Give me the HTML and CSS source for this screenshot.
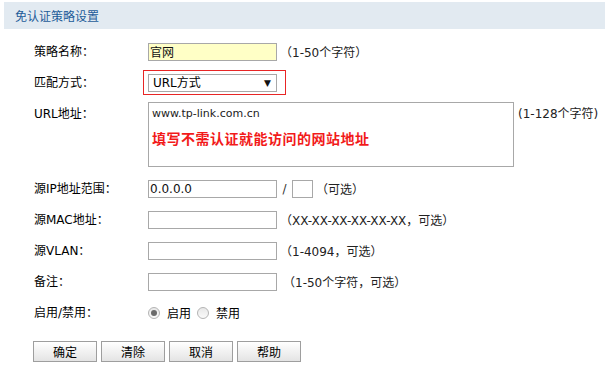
FILE: index.html
```html
<!DOCTYPE html>
<html lang="zh-CN">
<head>
<meta charset="utf-8">
<title>免认证策略设置</title>
<link rel="stylesheet" href="styles.css">
</head>
<body>
<div class="page">
  <div class="title-bar">免认证策略设置</div>
  <div class="form">
    <div class="row">
      <div class="label">策略名称：</div>
      <div class="input name">官网</div>
      <div class="hint">（1-50个字符）</div>
    </div>
    <div class="row">
      <div class="label">匹配方式：</div>
      <div class="select-wrap">
        <div class="select"><span>URL方式</span><span class="arrow">▼</span></div>
        <div class="mark"></div>
      </div>
    </div>
    <div class="row row-area">
      <div class="label">URL地址：</div>
      <div class="textarea">
        <div class="url">www.tp-link.com.cn</div>
        <div class="note">填写不需认证就能访问的网站地址</div>
      </div>
      <div class="hint hint-area">(1-128个字符)</div>
    </div>
    <div class="row">
      <div class="label">源IP地址范围：</div>
      <div class="input">0.0.0.0</div>
      <div class="slash">/</div>
      <div class="input mask"></div>
      <div class="hint">（可选）</div>
    </div>
    <div class="row">
      <div class="label">源MAC地址：</div>
      <div class="input"></div>
      <div class="hint">（XX-XX-XX-XX-XX-XX，可选）</div>
    </div>
    <div class="row">
      <div class="label">源VLAN：</div>
      <div class="input"></div>
      <div class="hint">（1-4094，可选）</div>
    </div>
    <div class="row">
      <div class="label">备注：</div>
      <div class="input"></div>
      <div class="hint hint-wide">（1-50个字符，可选）</div>
    </div>
    <div class="row">
      <div class="label">启用/禁用：</div>
      <div class="radios">
        <span class="radio checked"></span><span class="radio-text">启用</span>
        <span class="radio"></span><span class="radio-text">禁用</span>
      </div>
    </div>
    <div class="buttons">
      <div class="btn">确定</div>
      <div class="btn">清除</div>
      <div class="btn">取消</div>
      <div class="btn">帮助</div>
    </div>
  </div>
</div>
</body>
</html>
```
FILE: styles.css
```css
* { box-sizing: border-box; }
html, body { margin: 0; padding: 0; background: #fff; }
body {
  font-family: "DejaVu Sans", "Noto Sans CJK SC", sans-serif;
  font-size: 12px;
  color: #000;
}
.page { width: 605px; height: 374px; padding-top: 2px; padding-left: 4px; }
.title-bar {
  height: 27px;
  background: #e2eaf1;
  color: #1d5c99;
  line-height: 27px;
  padding-left: 11px;
  font-family: "Noto Sans CJK SC", sans-serif;
}
.form { padding-top: 7px; padding-left: 30px; }
.row {
  display: flex;
  align-items: center;
  height: 31px;
}
.label { width: 114px; line-height: 16px; }
.input {
  width: 129px;
  height: 18px;
  border: 1px solid #a8a8a8;
  background: #fff;
  line-height: 16px;
  padding-left: 1px;
  color: #111;
}
.input.name { background: #ffffc6; font-family: "Noto Sans CJK SC", sans-serif; }
.input.mask { width: 21px; }
.slash { width: 15px; text-align: center; color: #333; }
.hint { margin-left: 3px; color: #222; }
.hint-wide { margin-left: 6px; }
.select-wrap { position: relative; }
.select {
  width: 129px;
  height: 18px;
  border: 1px solid #a8a8a8;
  display: flex;
  justify-content: space-between;
  align-items: center;
  padding: 0 5px 0 4px;
  line-height: 16px;
}
.arrow { font-size: 9px; color: #111; }
.mark {
  position: absolute;
  left: -5px;
  top: -4px;
  width: 143px;
  height: 25px;
  border: 1px solid #e82525;
}
.row-area { height: 75px; align-items: flex-start; padding-top: 4px; }
.row-area .label { padding-top: 4px; }
.textarea {
  width: 366px;
  height: 65px;
  border: 1px solid #a8a8a8;
  padding: 3px 0 0 3px;
}
.url { font-size: 11px; line-height: 16px; color: #222; }
.note {
  margin-top: 7px;
  color: #f21a1a;
  font-weight: bold;
  font-size: 14px;
  letter-spacing: 0.5px;
  line-height: 18px;
  font-family: "Noto Sans CJK SC", sans-serif;
}
.hint-area { margin-left: 4px; padding-top: 2px; }
.radios { display: flex; align-items: center; }
.radio {
  width: 12px;
  height: 12px;
  border-radius: 50%;
  border: 1px solid #b4b4b4;
  background: linear-gradient(#e8e8e8, #fafafa);
  display: flex;
  align-items: center;
  justify-content: center;
}
.radio.checked::after {
  content: "";
  width: 6px;
  height: 6px;
  border-radius: 50%;
  background: #6b6b6b;
}
.radio-text { margin: 0 6px 0 7px; }
.buttons { display: flex; gap: 4px; margin-top: 13px; margin-left: -1px; }
.btn {
  width: 64px;
  height: 21px;
  border: 1px solid #9e9e9e;
  background: linear-gradient(#ffffff, #e4e4e4);
  text-align: center;
  line-height: 19px;
  font-family: "Noto Sans CJK SC", sans-serif;
}
```
